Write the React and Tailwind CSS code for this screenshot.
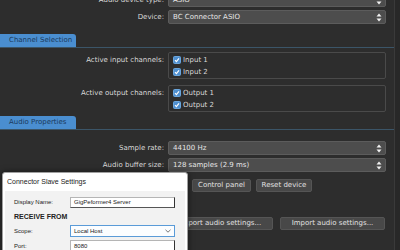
import React from 'react';

const ui = { fontFamily: '"DejaVu Sans", sans-serif' };
const win = { fontFamily: '"Liberation Sans", Arial, sans-serif' };

function Spinner() {
    return (
        <svg width="6" height="9" viewBox="0 0 6 9" className="shrink-0">
            <path d="M3 0.5 L5.5 3.5 L0.5 3.5 Z" fill="#f2f2f2" />
            <path d="M3 8.5 L5.5 5.5 L0.5 5.5 Z" fill="#f2f2f2" />
        </svg>
    );
}

function Select({ value, className = '' }) {
    return (
        <div className={`h-[14px] flex items-center justify-between pl-[4px] pr-[3px] bg-[#4d4d4d] border border-[#5c5c5c] rounded-[2px] text-[#e6e6e6] ${className}`}>
            <span>{value}</span>
            <Spinner />
        </div>
    );
}

function Check({ label }) {
    return (
        <div className="flex items-center gap-[2px] h-[12px]">
            <svg width="8" height="8" viewBox="0 0 8 8" className="shrink-0">
                <rect x="0.5" y="0.5" width="7" height="7" rx="1" fill="#4f8fcf" stroke="#6aa6dd" />
                <path d="M2 4.2 L3.4 5.6 L6 2.4" fill="none" stroke="#ffffff" strokeWidth="1.2" />
            </svg>
            <span>{label}</span>
        </div>
    );
}

function Tab({ children, className = '' }) {
    return (
        <div className={`flex items-end border-b border-[#3b5568] ${className}`}>
            <div className="h-[13px] w-[76px] pl-[9px] flex items-center bg-[#4a8ed0] text-[#1b3a5c] rounded-tr-[3px]">
                {children}
            </div>
        </div>
    );
}

function Btn({ children, className = '' }) {
    return (
        <div className={`h-[13px] flex items-center justify-center bg-[#484848] border border-[#555] rounded-[2px] text-[#e0e0e0] ${className}`}>
            {children}
        </div>
    );
}

export default function App() {
    return (
        <div className="relative w-[400px] h-[250px] overflow-hidden bg-[#282828] flex">
            <div className="w-[395px] h-full bg-[#2d2d2d] border-r border-[#3a3a3a] text-[7px] text-[#d9d9d9]" style={ui}>
                <div className="grid grid-cols-[164px_218px] gap-x-[4px] items-center -mt-[7px]">
                    <span className="text-right">Audio device type:</span>
                    <Select value="ASIO" />
                </div>
                <div className="grid grid-cols-[164px_218px] gap-x-[4px] items-center mt-[3px]">
                    <span className="text-right">Device:</span>
                    <Select value="BC Connector ASIO" className="h-[13px]" />
                </div>

                <Tab className="mt-[10px]">Channel Selection</Tab>

                <div className="grid grid-cols-[164px_218px] gap-x-[4px] items-start mt-[4px]">
                    <span className="text-right mt-[3px]">Active input channels:</span>
                    <div className="h-[27px] border border-[#4a4a4a] rounded-[2px] pl-[4px] pt-[1px]">
                        <Check label="Input 1" />
                        <Check label="Input 2" />
                    </div>
                </div>
                <div className="grid grid-cols-[164px_218px] gap-x-[4px] items-start mt-[6px]">
                    <span className="text-right mt-[3px]">Active output channels:</span>
                    <div className="h-[27px] border border-[#4a4a4a] rounded-[2px] pl-[4px] pt-[1px]">
                        <Check label="Output 1" />
                        <Check label="Output 2" />
                    </div>
                </div>

                <Tab className="mt-[4px]">Audio Properties</Tab>

                <div className="grid grid-cols-[164px_218px] gap-x-[4px] items-center mt-[11px]">
                    <span className="text-right">Sample rate:</span>
                    <Select value="44100 Hz" />
                </div>
                <div className="grid grid-cols-[164px_218px] gap-x-[4px] items-center mt-[3px]">
                    <span className="text-right">Audio buffer size:</span>
                    <Select value="128 samples (2.9 ms)" />
                </div>

                <div className="flex gap-[5px] pl-[192px] mt-[7px]">
                    <Btn className="w-[59px]">Control panel</Btn>
                    <Btn className="w-[56px]">Reset device</Btn>
                </div>
                <div className="flex gap-[7px] pl-[168px] mt-[25px]">
                    <Btn className="w-[105px]">Export audio settings...</Btn>
                    <Btn className="w-[105px]">Import audio settings...</Btn>
                </div>
            </div>

            {/* Windows dialog over the panel */}
            <div className="absolute left-[2px] top-[172px] w-[186px] h-[90px] bg-white border border-[#a0a0a0] rounded-t-[3px] shadow-[0_0_6px_rgba(0,0,0,0.5)] text-[#222]" style={win}>
                <div className="h-[18px] flex items-center pl-[4px] text-[7px]">Connector Slave Settings</div>
                <div className="mx-[2px] h-full bg-[#f2f2f2] pl-[9px] pt-[6px] text-[6px]">
                    <div className="flex items-center">
                        <span className="w-[56px]">Display Name:</span>
                        <div className="w-[105px] h-[11px] bg-white border border-[#b5b5b5] border-r-[#333] border-b-[#555] flex items-center pl-[3px]">GigPeformer4 Server</div>
                    </div>
                    <div className="mt-[4px] h-[10px] flex items-center font-bold text-[7px]">RECEIVE FROM</div>
                    <div className="flex items-center mt-[3px]">
                        <span className="w-[56px]">Scope:</span>
                        <div className="w-[105px] h-[12px] bg-[#fbfdff] border border-[#5a9bd8] flex items-center justify-between pl-[3px] pr-[3px]">
                            <span>Local Host</span>
                            <svg width="6" height="4" viewBox="0 0 6 4">
                                <path d="M0.5 0.8 L3 3.2 L5.5 0.8" fill="none" stroke="#555" strokeWidth="0.8" />
                            </svg>
                        </div>
                    </div>
                    <div className="flex items-center mt-[3px]">
                        <span className="w-[56px]">Port:</span>
                        <div className="w-[105px] h-[12px] bg-white border border-[#b5b5b5] border-r-[#333] flex items-center pl-[3px]">8080</div>
                    </div>
                </div>
            </div>
        </div>
    );
}
